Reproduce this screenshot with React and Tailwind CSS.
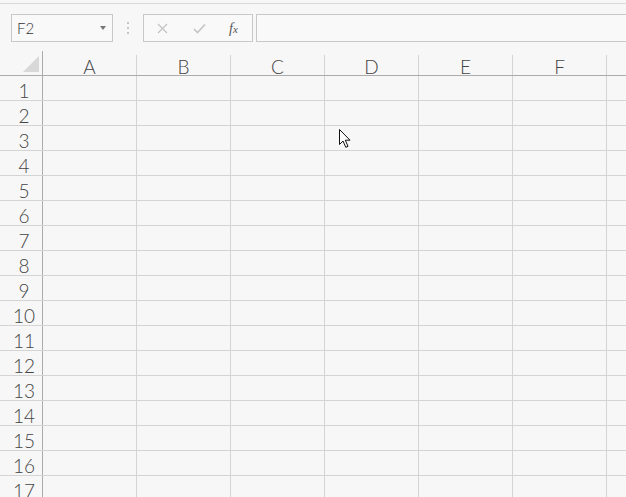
import React from "react";

const COLS = ["A", "B", "C", "D", "E", "F", ""];
const ROWS = Array.from({ length: 17 }, (_, i) => i + 1);

function Cursor() {
  return (
    <svg
      className="absolute left-[339px] top-[129px]"
      width="13"
      height="20"
      viewBox="0 0 13 20"
    >
      <path
        d="M0.5 0.5 L0.5 15.5 L4 12 L6.8 18.3 L9 17.3 L6.3 11.2 L11 11.2 Z"
        fill="#fff"
        stroke="#111"
        strokeWidth="1"
        strokeLinejoin="miter"
      />
    </svg>
  );
}

export default function App() {
  return (
    <div
      className="relative h-[497px] w-[626px] overflow-hidden bg-[#f7f7f7] text-[#444]"
      style={{ fontFamily: 'Lato, "Open Sans", sans-serif' }}
    >
      <div className="h-[3px]" />
      <div className="h-px bg-[#d9d9d9]" />

      {/* formula bar */}
      <div className="flex h-[47px] items-start pt-[10px]">
        <div className="ml-[11px] flex h-[28px] w-[102px] items-center justify-between border border-[#c8c8c8] bg-[#f9f9f9] pl-[5px] pr-[6px]">
          <span className="text-[15px] font-light text-[#333]">F2</span>
          <span className="h-0 w-0 border-x-[3.5px] border-t-[4px] border-x-transparent border-t-[#777]" />
        </div>
        <div className="flex h-[28px] w-[30px] flex-col items-center justify-center gap-[3px]">
          <span className="h-[2px] w-[2px] rounded-full bg-[#b5b5b5]" />
          <span className="h-[2px] w-[2px] rounded-full bg-[#b5b5b5]" />
          <span className="h-[2px] w-[2px] rounded-full bg-[#b5b5b5]" />
        </div>
        <div className="flex h-[28px] w-[110px] items-center border border-[#c8c8c8] bg-[#f9f9f9]">
          <svg className="ml-[13px]" width="11" height="11" viewBox="0 0 11 11">
            <path d="M1 1 L10 10 M10 1 L1 10" stroke="#c4c4c4" strokeWidth="1.3" />
          </svg>
          <svg className="ml-[25px]" width="13" height="11" viewBox="0 0 13 11">
            <path d="M1 6 L4.5 9.5 L12 1.5" stroke="#c4c4c4" strokeWidth="1.6" fill="none" />
          </svg>
          <span
            className="ml-[23px] text-[14px] italic text-[#555]"
            style={{ fontFamily: '"Liberation Serif", serif' }}
          >
            f<span className="text-[11px]">x</span>
          </span>
        </div>
        <div className="ml-[3px] h-[28px] flex-1 border border-r-0 border-[#c8c8c8] bg-[#f9f9f9]" />
      </div>

      {/* column headers */}
      <div className="flex h-[25px] border-b border-[#ababab]">
        <div className="relative w-[43px] shrink-0 border-r border-[#ababab]">
          <span className="absolute bottom-[3px] right-[3px] h-0 w-0 border-b-[16px] border-l-[16px] border-b-[#d8d8d8] border-l-transparent" />
        </div>
        {COLS.map((c, i) => (
          <div key={i} className="flex w-[94px] shrink-0 pt-[4px]">
            <div className="flex h-full w-full items-center justify-center border-r border-[#d4d4d4] pt-[3px] text-[19px] font-light leading-none text-[#444]">
              {c}
            </div>
          </div>
        ))}
      </div>

      {/* rows */}
      {ROWS.map((r) => (
        <div key={r} className="flex h-[25px] border-b border-[#d4d4d4]">
          <div className="flex w-[43px] shrink-0 items-center justify-center border-r border-[#ababab] pl-[6px] pt-[5px] text-[19px] font-light leading-none text-[#444]">
            {r}
          </div>
          {COLS.map((c, i) => (
            <div key={i} className="w-[94px] shrink-0 border-r border-[#d4d4d4]" />
          ))}
        </div>
      ))}

      <Cursor />
    </div>
  );
}
